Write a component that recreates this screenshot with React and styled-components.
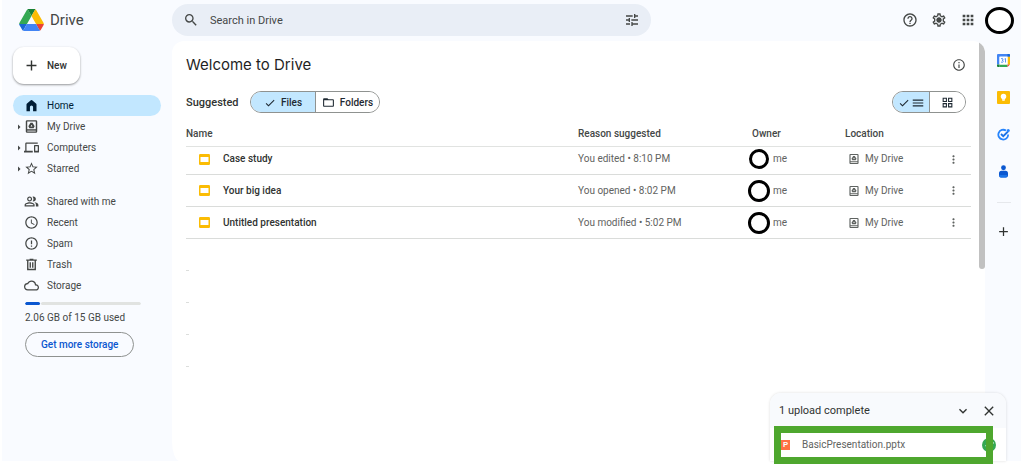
import React from "react";
import styled, { createGlobalStyle } from "styled-components";
import {
  MdSearch,
  MdTune,
  MdHelpOutline,
  MdOutlineSettings,
  MdApps,
  MdInfoOutline,
  MdDevices,
  MdStarBorder,
  MdOutlinePeopleAlt,
  MdAccessTime,
  MdErrorOutline,
  MdCloudQueue,
  MdCheck,
  MdMenu,
  MdGridView,
  MdFolderOpen,
  MdMoreVert,
  MdExpandMore,
  MdClose,
  MdAdd,
  MdArrowRight,
} from "react-icons/md";

const GlobalStyle = createGlobalStyle`
  * { box-sizing: border-box; }
  body {
    margin: 0;
    background: #fff;
    color: #303331;
    font-family: Roboto, "Liberation Sans", sans-serif;
    font-size: 10px;
    line-height: 14px;
  }
  button, input { font: inherit; color: inherit; }
  button { background: none; border: 0; padding: 0; cursor: pointer; }
  svg { display: block; flex: none; }
`;

const Shell = styled.div`
  position: relative;
  display: flex;
  flex-direction: column;
  min-height: calc(100vh - 6px);
  margin: 0 3px 6px 2px;
  background: #f9fbff;
`;

const TopBar = styled.header`
  display: flex;
  align-items: center;
  height: 40px;
  padding-right: 7px;
`;

const Brand = styled.a`
  display: flex;
  align-items: center;
  gap: 6px;
  flex: none;
  width: 170px;
  padding-left: 17px;
  color: #444746;
  font-size: 15px;
  line-height: 20px;
  text-decoration: none;
`;

const SearchBox = styled.label`
  display: flex;
  align-items: center;
  flex: 0 1 479px;
  height: 32px;
  padding: 0 11px;
  gap: 11px;
  border-radius: 16px;
  background: #e9eef6;
  color: #444746;
`;

const SearchInput = styled.input`
  flex: 1;
  min-width: 0;
  padding: 1px 0 0;
  border: 0;
  outline: 0;
  background: none;
  font-size: 11px;
  &::placeholder { color: #444746; opacity: 1; }
`;

const TopActions = styled.div`
  display: flex;
  align-items: center;
  gap: 13px;
  margin-left: auto;
  color: #444746;
`;

const IconButton = styled.button`
  display: flex;
  align-items: center;
  justify-content: center;
`;

const Avatar = styled.button`
  width: 29px;
  height: 27px;
  margin-left: -4px;
  border: 3px solid #000;
  border-radius: 50%;
  background: #fff;
`;

const Body = styled.div`
  display: flex;
  flex: 1;
`;

const Sidebar = styled.aside`
  flex: none;
  width: 170px;
  padding: 7px 11px 0;
`;

const NewButton = styled.button`
  display: flex;
  align-items: center;
  gap: 7px;
  height: 37px;
  padding: 0 13px 0 10px;
  margin-bottom: 11px;
  border-radius: 11px;
  background: #fff;
  box-shadow: 0 1px 2px rgba(0, 0, 0, 0.3), 0 1px 3px rgba(0, 0, 0, 0.12);
  font-weight: 500;
`;

const NavList = styled.ul`
  margin: 0 0 12px;
  padding: 0;
  list-style: none;
`;

const NavLink = styled.a`
  display: grid;
  grid-template-columns: 11px 15px 1fr;
  align-items: center;
  height: 21px;
  border-radius: 11px;
  background: ${(p) => (p.$active ? "#c2e7ff" : "transparent")};
  color: ${(p) => (p.$active ? "#001d35" : "#444746")};
  text-decoration: none;
`;

const NavText = styled.span`
  padding: 1px 0 0 8px;
`;

const Storage = styled.section`
  padding: 0 12px;
  margin-top: -6px;
  color: #444746;
`;

const Meter = styled.div`
  display: flex;
  gap: 1px;
  width: 116px;
  height: 3px;
  margin: 0 0 6px;
  border-radius: 2px;
  overflow: hidden;
`;

const MeterUsed = styled.span`
  flex: 0 0 15px;
  border-radius: 2px;
  background: #0b57d0;
`;

const MeterFree = styled.span`
  flex: 1;
  border-radius: 2px;
  background: #e1e3e1;
`;

const StorageButton = styled.button`
  height: 25px;
  margin-top: 7px;
  padding: 0 15px;
  border: 1px solid #8f9290;
  border-radius: 13px;
  color: #0b57d0;
  font-weight: 500;
  white-space: nowrap;
`;

const Main = styled.main`
  display: flex;
  flex: 1;
  min-width: 0;
  margin-top: 1px;
  border-radius: 12px 12px 0 8px / 12px 12px 0 20px;
  background: #fff;
  overflow: hidden;
`;

const Content = styled.div`
  flex: 1;
  min-width: 0;
  padding: 0 8px 0 14px;
`;

const ScrollBar = styled.div`
  flex: none;
  width: 6px;
  height: 228px;
  border-radius: 0 0 3px 3px;
  background: #c1c1c1;
`;

const TitleRow = styled.div`
  display: flex;
  align-items: center;
  justify-content: space-between;
  height: 48px;
  padding-right: 5px;
  color: #444746;
`;

const Title = styled.h1`
  margin: 0;
  color: #1f1f1f;
  font-family: Inter, Roboto, sans-serif;
  font-size: 15px;
  font-weight: 400;
  line-height: 22px;
`;

const FilterRow = styled.div`
  display: flex;
  align-items: center;
  height: 26px;
  padding-right: 5px;
`;

const FilterTitle = styled.h2`
  flex: none;
  width: 64px;
  margin: 0;
  padding-top: 1px;
  font-size: 11px;
  font-weight: 500;
`;

const Segmented = styled.div`
  display: flex;
  height: 22px;
  margin-left: ${(p) => (p.$end ? "auto" : "0")};
  border: 1px solid #8f9290;
  border-radius: 11px;
  overflow: hidden;
`;

const Segment = styled.button`
  display: flex;
  align-items: center;
  justify-content: center;
  gap: ${(p) => (p.$compact ? "1px" : "5px")};
  width: ${(p) => (p.$compact ? "36px" : "64px")};
  padding-top: 1px;
  background: ${(p) => (p.$on ? "#c2e7ff" : "#fff")};
  color: #1f2a33;
  font-weight: 500;
  & + & { border-left: 1px solid #8f9290; }
`;

const FileTable = styled.table`
  width: 100%;
  table-layout: fixed;
  border-collapse: collapse;
  color: #5f6361;
`;

const Col = styled.col`
  width: ${(p) => p.$width};
`;

const HeadCell = styled.th`
  height: 31px;
  padding: 8px 0 0 ${(p) => (p.$inset ? "4px" : "0")};
  border-bottom: 1px solid #e1e3e1;
  color: #444746;
  font-weight: 500;
  text-align: left;
`;

const Row = styled.tr`
  height: ${(p) => (p.$short ? "28px" : "32px")};
`;

const Cell = styled.td`
  padding: ${(p) => (p.$short ? "0 0 2px" : "1px 0 0")};
  border-bottom: 1px solid #dadcda;
`;

const Inline = styled.div`
  display: flex;
  align-items: center;
  gap: ${(p) => p.$gap || "0"};
  padding-left: ${(p) => p.$indent || "0"};
`;

const FileName = styled.span`
  color: #303331;
  font-weight: 500;
`;

const RingSlot = styled.span`
  display: flex;
  justify-content: center;
  width: 22px;
`;

const Ring = styled.span`
  width: ${(p) => (p.$small ? "20px" : "22px")};
  height: ${(p) => (p.$small ? "20px" : "22px")};
  border: 3px solid #000;
  border-radius: 50%;
  background: #fff;
`;

const Marks = styled.div`
  display: grid;
  gap: 31px;
  padding-top: 31px;
`;

const Mark = styled.span`
  width: 3px;
  height: 1px;
  background: #dcdedc;
`;

const Rail = styled.nav`
  display: flex;
  flex-direction: column;
  align-items: center;
  flex: none;
  width: 36px;
  padding: 14px 0 0 1px;
  gap: 24px;
`;

const RailRule = styled.span`
  width: 14px;
  height: 1px;
  margin-bottom: -3px;
  background: #e6e8ec;
`;

const Toast = styled.section`
  position: absolute;
  right: 15px;
  bottom: 0;
  width: 236px;
  border-radius: 11px 11px 0 0;
  background: #fff;
  box-shadow: 0 0 3px rgba(0, 0, 0, 0.14);
`;

const ToastHead = styled.header`
  display: flex;
  align-items: center;
  gap: 10px;
  height: 35px;
  padding: 0 9px;
  border-radius: 11px 11px 0 0;
  background: #f8fafd;
`;

const ToastTitle = styled.h2`
  flex: 1;
  margin: 0;
  font-size: 11px;
  font-weight: 400;
`;

const ToastItem = styled.div`
  display: flex;
  align-items: center;
  height: 33px;
  padding: 0 10px 0 11px;
  gap: 12px;
  color: #5f6361;
`;

const PptBadge = styled.span`
  width: 9px;
  height: 10px;
  background: #ff7043;
  color: #fff;
  font-size: 8px;
  font-weight: 600;
  line-height: 10px;
  text-align: center;
`;

const UploadName = styled.span`
  flex: 1;
  padding-top: 1px;
`;

const Highlight = styled.div`
  position: absolute;
  left: 4px;
  right: 13px;
  top: 33px;
  height: 38px;
  border: 7px solid #4ea72e;
`;

const DriveLogo = () => (
  <svg width="25" height="22" viewBox="0 0 87.3 78" aria-hidden="true">
    <path d="m6.6 66.85 3.85 6.65c.8 1.4 1.95 2.5 3.3 3.3l13.75-23.8h-27.5c0 1.55.4 3.1 1.2 4.5z" fill="#1967d2" />
    <path d="m43.65 25-13.75-23.8c-1.35.8-2.5 1.9-3.3 3.3l-25.4 44a9.06 9.06 0 0 0-1.2 4.5h27.5z" fill="#34a853" />
    <path d="m73.55 76.8c1.35-.8 2.5-1.9 3.3-3.3l1.6-2.75 7.65-13.25c.8-1.4 1.2-2.95 1.2-4.5h-27.5l5.85 11.5z" fill="#ea4335" />
    <path d="m43.65 25 13.75-23.8c-1.35-.8-2.9-1.2-4.5-1.2h-18.5c-1.6 0-3.15.45-4.5 1.2z" fill="#188038" />
    <path d="m59.8 53h-32.3l-13.75 23.8c1.35.8 2.9 1.2 4.5 1.2h50.8c1.6 0 3.15-.45 4.5-1.2z" fill="#4285f4" />
    <path d="m73.4 26.5-12.7-22c-.8-1.4-1.95-2.5-3.3-3.3l-13.75 23.8 16.15 28h27.45c0-1.55-.4-3.1-1.2-4.5z" fill="#fbbc04" />
  </svg>
);

const HomeIcon = () => (
  <svg width="15" height="15" viewBox="0 0 24 24" aria-hidden="true">
    <path d="M4 21V10.500Q4 9.500 4.800 8.900L11 3.500q1-.8 2 0l6.200 5.400q.8.600.8 1.600V21h-5.500v-6.500a2.500 2.500 0 0 0-5 0V21z" fill="currentColor" />
  </svg>
);

const MyDriveIcon = ({ size = 15 }) => (
  <svg width={size} height={size} viewBox="0 0 24 24" fill="none" stroke="currentColor" strokeWidth="2.300" aria-hidden="true">
    <rect x="4" y="3" width="16" height="18" rx="1" />
    <path d="M4 17.500h16" />
    <path d="M10.300 6h3.400l3.300 5.600-1.600 3H8.600L7 11.600z" fill="currentColor" stroke="none" />
    <path d="M12 9.200l1.500 2.800h-3z" fill="#fff" stroke="none" />
  </svg>
);

const TrashIcon = () => (
  <svg width="15" height="15" viewBox="0 0 24 24" fill="none" stroke="currentColor" strokeWidth="2.200" aria-hidden="true">
    <path d="M3.500 5h17M9 4h6M6 5v15h12V5M10 8.500v8.500M14 8.500v8.500" />
  </svg>
);

const SettingsIcon = () => (
  <svg width="16" height="16" viewBox="0 0 24 24" aria-hidden="true">
    <MdOutlineSettings size={24} />
    <circle cx="12" cy="12" r="3.500" fill="currentColor" />
  </svg>
);

const SlidesIcon = () => (
  <svg width="11" height="11" viewBox="0 0 22 22" aria-hidden="true">
    <rect width="22" height="22" rx="2.500" fill="#fbbc04" />
    <rect x="3" y="6" width="16" height="10" fill="#fff" />
  </svg>
);

const CalendarIcon = () => (
  <svg width="13" height="13" viewBox="0 0 26 26" aria-hidden="true">
    <path d="M2 0h22a2 2 0 0 1 2 2v4H0V2a2 2 0 0 1 2-2z" fill="#4285f4" />
    <path d="M0 5h5v16H0z" fill="#4285f4" />
    <path d="M21 5h5v16h-5z" fill="#fbbc04" />
    <path d="M21 0h3a2 2 0 0 1 2 2v3h-5z" fill="#1967d2" />
    <path d="M5 21h16v5H5z" fill="#34a853" />
    <path d="M0 21h5v5H2a2 2 0 0 1-2-2z" fill="#188038" />
    <path d="M21 26v-5h5z" fill="#ea4335" />
    <path d="M5 5h16v16H5z" fill="#fff" />
    <path d="M8 9.500q4-2 4 1 0 2-2 2 2.500 0 2.500 2.200 0 3-4.500 1.500M15 10l2-1v8" fill="none" stroke="#4285f4" strokeWidth="1.700" />
  </svg>
);

const KeepIcon = () => (
  <svg width="13" height="13" viewBox="0 0 26 26" aria-hidden="true">
    <rect width="26" height="26" rx="2" fill="#fbbc04" />
    <circle cx="13" cy="11" r="5.500" fill="#fff" />
    <path d="M10 15h6v2.500h-6zM10.500 18.500h5V20h-5z" fill="#fff" />
  </svg>
);

const TasksIcon = () => (
  <svg width="13" height="13" viewBox="0 0 26 26" fill="none" aria-hidden="true">
    <path d="M18 5.200A9.800 9.800 0 1 0 22.300 13" stroke="#2684fc" strokeWidth="3.600" />
    <path d="M8 12l4.500 4.500L22 7" stroke="#1a73e8" strokeWidth="3.600" />
    <circle cx="22.500" cy="5" r="3" fill="#2684fc" />
  </svg>
);

const ContactsIcon = () => (
  <svg width="13" height="13" viewBox="0 0 26 26" aria-hidden="true">
    <circle cx="13" cy="5.500" r="4.800" fill="#0b57d0" />
    <path d="M9 11.500h8a5 5 0 0 1 5 5V21a4 4 0 0 1-4 4H8a4 4 0 0 1-4-4v-4.500a5 5 0 0 1 5-5z" fill="#0b57d0" />
    <path d="M5 20h15v2a3 3 0 0 1-3 3H8a3 3 0 0 1-3-3z" fill="#1a73e8" />
  </svg>
);

const DoneIcon = () => (
  <svg width="14" height="14" viewBox="0 0 28 28" aria-hidden="true">
    <circle cx="14" cy="14" r="14" fill="#34a853" />
    <path d="M7.500 14.500l4.500 4.500L23 9" fill="none" stroke="#fff" strokeWidth="2.800" />
  </svg>
);

const placeLinks = [
  { label: "Home", icon: <HomeIcon />, active: true },
  { label: "My Drive", icon: <MyDriveIcon />, expandable: true },
  { label: "Computers", icon: <MdDevices size={15} />, expandable: true },
  { label: "Starred", icon: <MdStarBorder size={15} />, expandable: true },
];

const viewLinks = [
  { label: "Shared with me", icon: <MdOutlinePeopleAlt size={15} /> },
  { label: "Recent", icon: <MdAccessTime size={15} /> },
  { label: "Spam", icon: <MdErrorOutline size={15} /> },
  { label: "Trash", icon: <TrashIcon /> },
  { label: "Storage", icon: <MdCloudQueue size={15} /> },
];

const files = [
  { name: "Case study", reason: "You edited • 8:10 PM", first: true },
  { name: "Your big idea", reason: "You opened • 8:02 PM" },
  { name: "Untitled presentation", reason: "You modified • 5:02 PM" },
];

const Nav = ({ links }) => (
  <NavList>
    {links.map((l) => (
      <li key={l.label}>
        <NavLink href="#" $active={l.active}>
          <span>{l.expandable && <MdArrowRight size={12} />}</span>
          {l.icon}
          <NavText>{l.label}</NavText>
        </NavLink>
      </li>
    ))}
  </NavList>
);

export default function App() {
  return (
    <>
      <GlobalStyle />
      <Shell>
        <TopBar>
          <Brand href="#">
            <DriveLogo />
            Drive
          </Brand>
          <SearchBox>
            <MdSearch size={16} />
            <SearchInput type="text" placeholder="Search in Drive" aria-label="Search in Drive" />
            <IconButton aria-label="Search options">
              <MdTune size={16} />
            </IconButton>
          </SearchBox>
          <TopActions>
            <IconButton aria-label="Help"><MdHelpOutline size={16} /></IconButton>
            <IconButton aria-label="Settings"><SettingsIcon /></IconButton>
            <IconButton aria-label="Apps"><MdApps size={16} /></IconButton>
            <Avatar aria-label="Account" />
          </TopActions>
        </TopBar>
        <Body>
          <Sidebar>
            <NewButton>
              <MdAdd size={17} />
              New
            </NewButton>
            <Nav links={placeLinks} />
            <Nav links={viewLinks} />
            <Storage>
              <Meter>
                <MeterUsed />
                <MeterFree />
              </Meter>
              2.06 GB of 15 GB used
              <StorageButton>Get more storage</StorageButton>
            </Storage>
          </Sidebar>
          <Main>
            <Content>
              <TitleRow>
                <Title>Welcome to Drive</Title>
                <IconButton aria-label="View details"><MdInfoOutline size={14} /></IconButton>
              </TitleRow>
              <FilterRow>
                <FilterTitle>Suggested</FilterTitle>
                <Segmented>
                  <Segment $on><MdCheck size={12} />Files</Segment>
                  <Segment><MdFolderOpen size={13} />Folders</Segment>
                </Segmented>
                <Segmented $end>
                  <Segment $compact $on aria-label="List layout">
                    <MdCheck size={12} />
                    <MdMenu size={14} />
                  </Segment>
                  <Segment $compact aria-label="Grid layout"><MdGridView size={13} /></Segment>
                </Segmented>
              </FilterRow>
              <FileTable>
                <colgroup>
                  <Col />
                  <Col $width="170px" />
                  <Col $width="97px" />
                  <Col $width="102px" />
                  <Col $width="24px" />
                </colgroup>
                <thead>
                  <tr>
                    <HeadCell>Name</HeadCell>
                    <HeadCell>Reason suggested</HeadCell>
                    <HeadCell $inset>Owner</HeadCell>
                    <HeadCell>Location</HeadCell>
                    <HeadCell aria-label="Actions" />
                  </tr>
                </thead>
                <tbody>
                  {files.map((f) => (
                    <Row key={f.name} $short={f.first}>
                      <Cell $short={f.first}>
                        <Inline $gap="13px" $indent="13px">
                          <SlidesIcon />
                          <FileName>{f.name}</FileName>
                        </Inline>
                      </Cell>
                      <Cell $short={f.first}>{f.reason}</Cell>
                      <Cell $short={f.first}>
                        <Inline $gap="3px">
                          <RingSlot><Ring $small={f.first} /></RingSlot>
                          me
                        </Inline>
                      </Cell>
                      <Cell $short={f.first}>
                        <Inline $gap="5px" $indent="3px">
                          <MyDriveIcon size={12} />
                          My Drive
                        </Inline>
                      </Cell>
                      <Cell $short={f.first}>
                        <IconButton aria-label={"More actions for " + f.name}><MdMoreVert size={13} /></IconButton>
                      </Cell>
                    </Row>
                  ))}
                </tbody>
              </FileTable>
              <Marks>
                <Mark />
                <Mark />
                <Mark />
                <Mark />
              </Marks>
            </Content>
            <ScrollBar />
          </Main>
          <Rail>
            <IconButton aria-label="Calendar"><CalendarIcon /></IconButton>
            <IconButton aria-label="Keep"><KeepIcon /></IconButton>
            <IconButton aria-label="Tasks"><TasksIcon /></IconButton>
            <IconButton aria-label="Contacts"><ContactsIcon /></IconButton>
            <RailRule />
            <IconButton aria-label="Get add-ons"><MdAdd size={15} /></IconButton>
          </Rail>
        </Body>
        <Toast>
          <ToastHead>
            <ToastTitle>1 upload complete</ToastTitle>
            <IconButton aria-label="Collapse"><MdExpandMore size={16} /></IconButton>
            <IconButton aria-label="Close"><MdClose size={16} /></IconButton>
          </ToastHead>
          <ToastItem>
            <PptBadge>P</PptBadge>
            <UploadName>BasicPresentation.pptx</UploadName>
            <DoneIcon />
          </ToastItem>
          <Highlight />
        </Toast>
      </Shell>
    </>
  );
}
